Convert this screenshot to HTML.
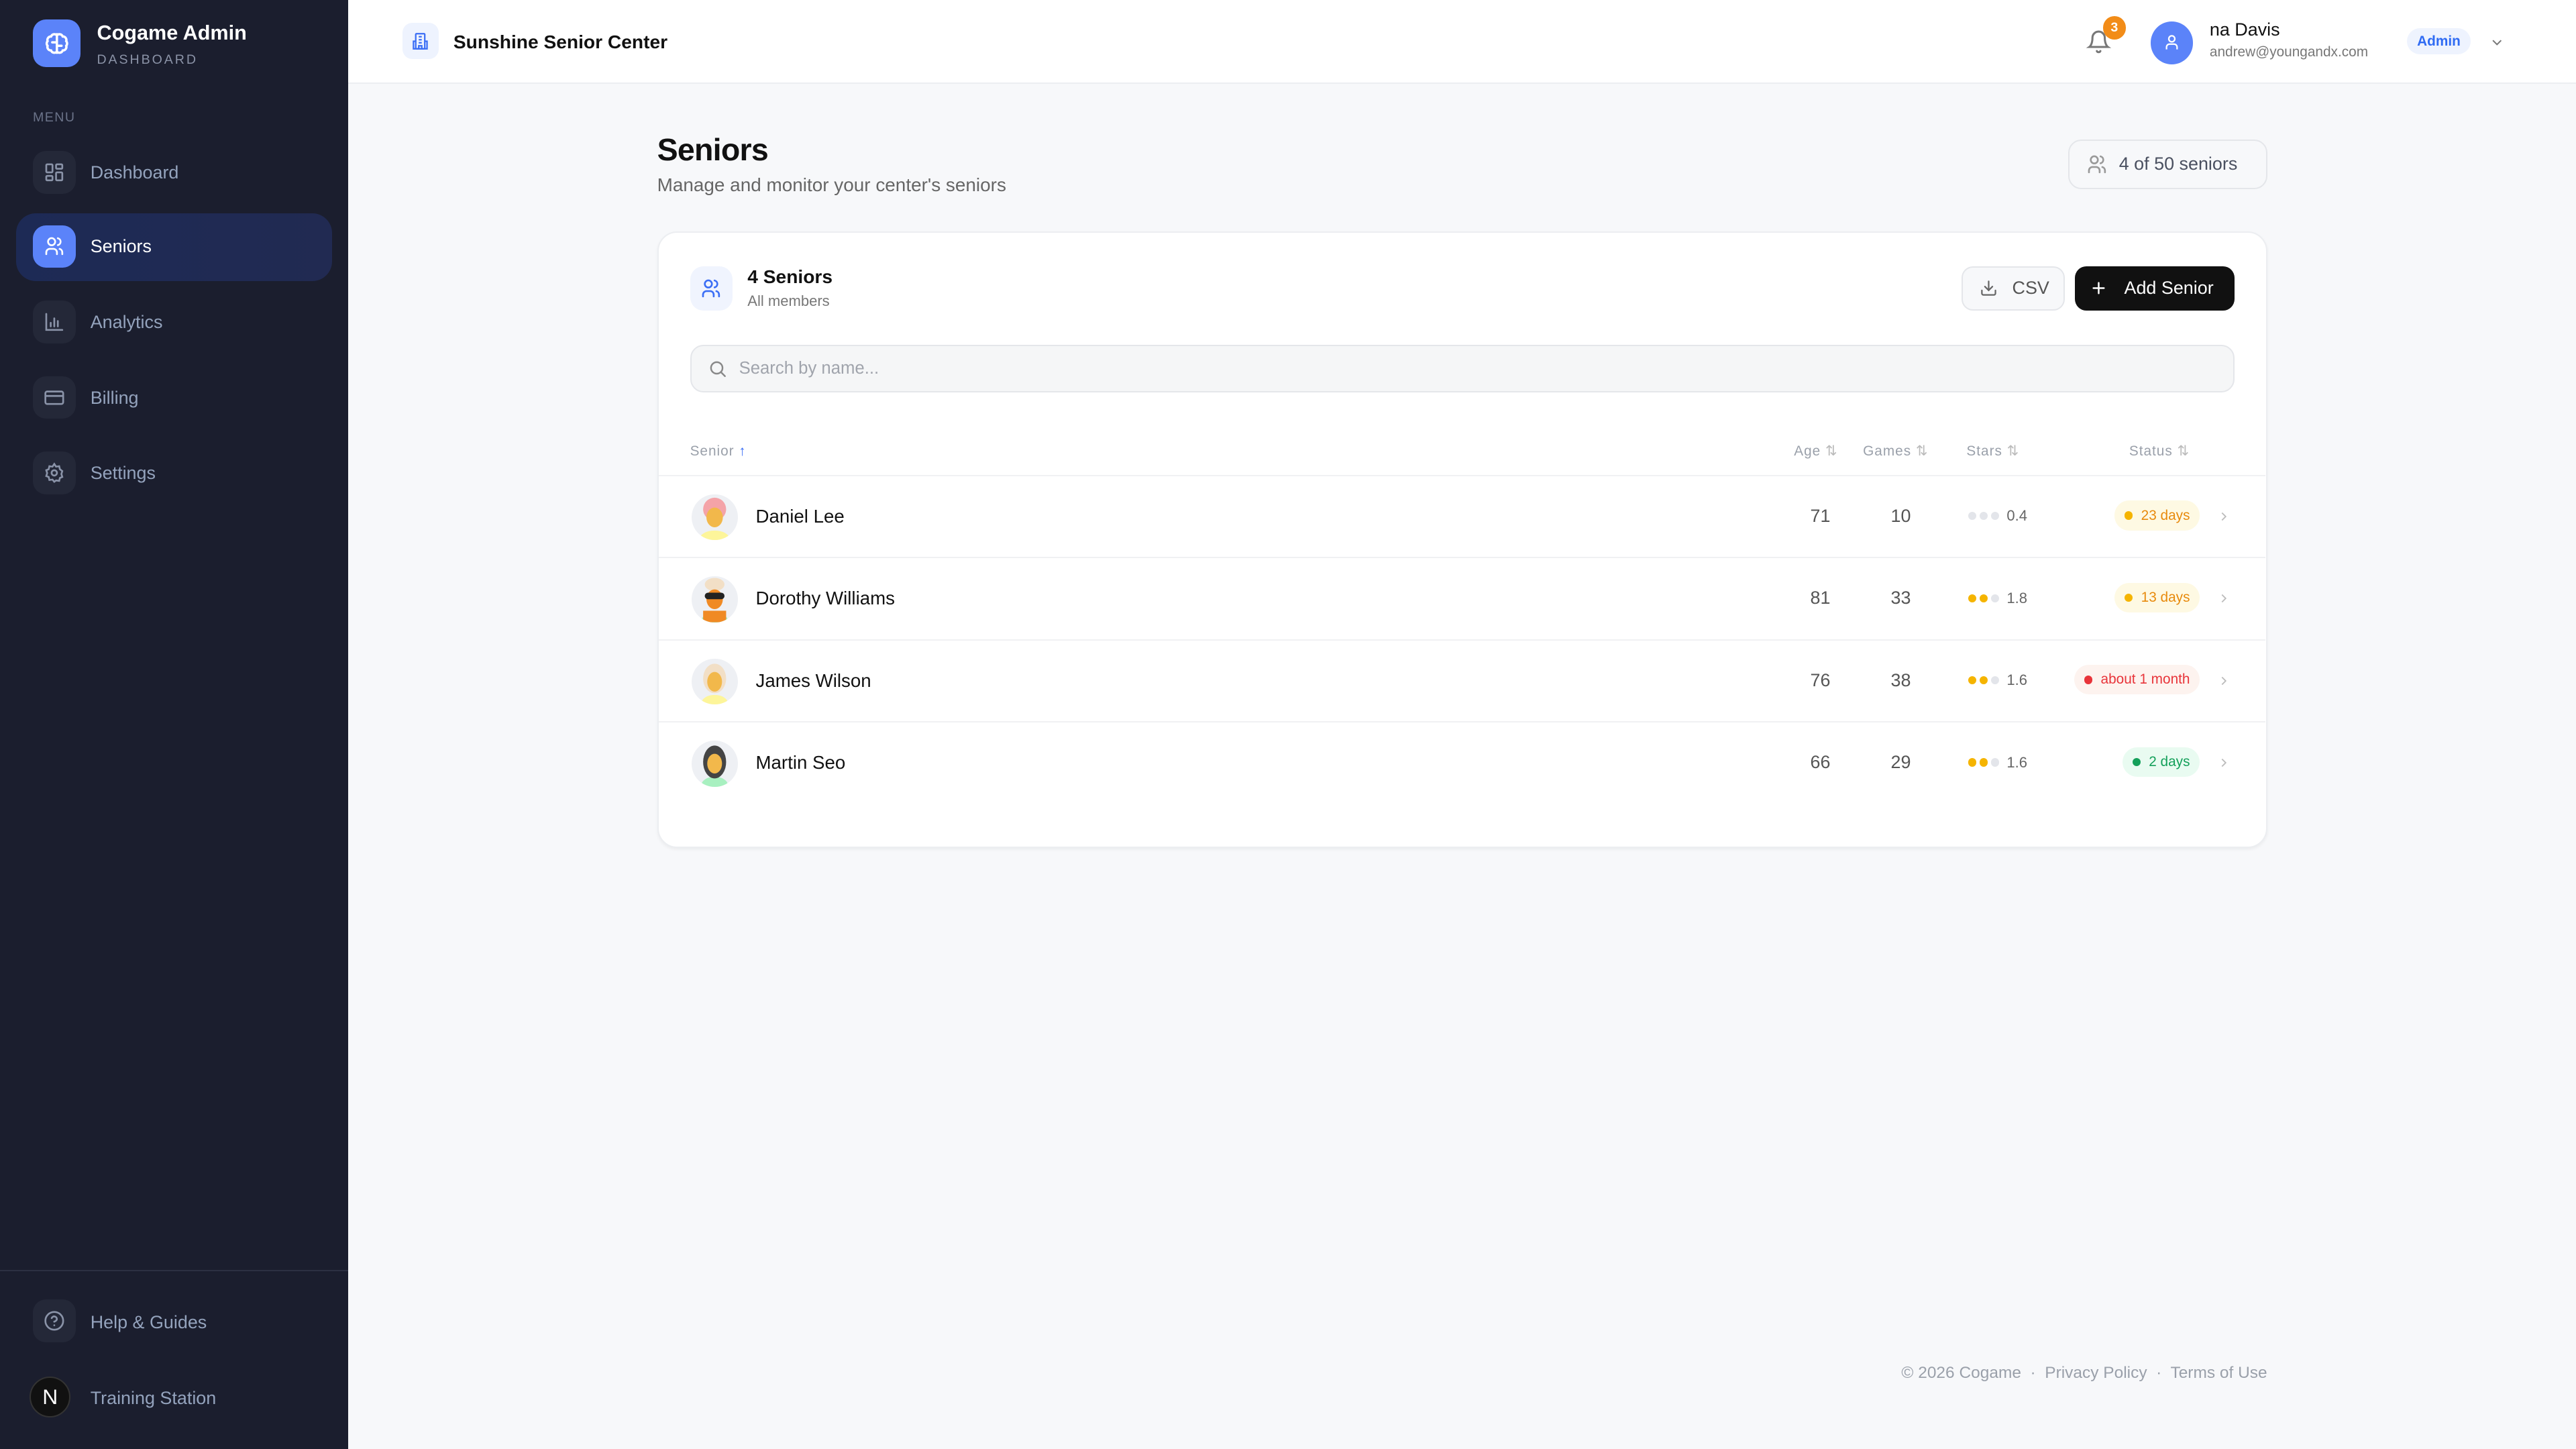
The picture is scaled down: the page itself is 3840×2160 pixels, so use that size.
<!DOCTYPE html>
<html><head><meta charset="utf-8">
<style>
*{box-sizing:border-box;margin:0;padding:0}
html,body{width:3840px;height:2160px;overflow:hidden;background:#f7f8fa}
#r{position:relative;width:1568px;height:882px;zoom:2.44898;font-family:"Liberation Sans",sans-serif;background:#f7f8fa;color:#111}
.a{position:absolute}
.sb{left:0;top:0;width:212px;height:882px;background:#1b1e2e}
.nav .ib{position:absolute;left:20px;width:26px;height:26px;border-radius:8px;background:#242838;display:flex;align-items:center;justify-content:center}
.nav .lb{position:absolute;left:55px;font-size:11px;color:#94a3bd;line-height:14px}
svg{display:block}
.th{position:absolute;top:270px;font-size:8.5px;color:#9aa0aa;letter-spacing:.4px;line-height:10px}
.row{position:absolute;left:401px;width:978px;height:50px;border-top:1px solid #f0f1f3}
.av{position:absolute;left:20px;top:11px;width:28px;height:28px;border-radius:50%;background:#eef0f4;overflow:hidden}
.nm{position:absolute;left:59px;top:18px;font-size:11.3px;color:#111}
.num{position:absolute;top:18px;font-size:11px;color:#555;width:30px;text-align:center}
.st{position:absolute;left:797px;top:19px;font-size:9px;color:#666;display:flex;align-items:center;gap:2px}
.d{width:5px;height:5px;border-radius:50%;background:#e3e5ea}
.d.y{background:#f5b400}
.pill{position:absolute;right:40px;top:15px;height:18px;border-radius:9px;font-size:8.5px;display:flex;align-items:center;padding:0 6px;gap:5px}
.pill i{width:5px;height:5px;border-radius:50%;display:block}
.chev{position:absolute;left:948px;top:20px}
</style></head><body><div id="r">
<div class="a sb"></div>
<div class="a" style="left:20px;top:12px;width:29px;height:29px;border-radius:8px;background:#5b83f9;display:flex;align-items:center;justify-content:center">
<svg width="17" height="17" viewBox="0 0 24 24" fill="none" stroke="#fff" stroke-width="2" stroke-linecap="round"><path d="M12 4v16M12 5a3 3 0 0 0-5 1 3 3 0 0 0-3 4 3 3 0 0 0 0 4 3 3 0 0 0 3 4 3 3 0 0 0 5 1M12 5a3 3 0 0 1 5 1 3 3 0 0 1 3 4 3 3 0 0 1 0 4 3 3 0 0 1-3 4 3 3 0 0 1-5 1M8 11h4M12 14h4"/></svg></div>
<div class="a" style="left:59px;top:13px;font-size:12.5px;font-weight:bold;color:#fff">Cogame Admin</div>
<div class="a" style="left:59px;top:32px;font-size:8px;letter-spacing:1.2px;color:#8b93a7">DASHBOARD</div>
<div class="a" style="left:20px;top:67px;font-size:8px;letter-spacing:.6px;color:#6b7389">MENU</div>
<div class="a" style="left:10px;top:130px;width:192px;height:41px;border-radius:12px;background:linear-gradient(90deg,#1d2a55,#212a52)"></div>
<div class="nav">
<div class="ib" style="top:92px"><svg width="13" height="13" viewBox="0 0 24 24" fill="none" stroke="#8a93a8" stroke-width="2"><rect x="3" y="3" width="7" height="9" rx="1"/><rect x="14" y="3" width="7" height="5" rx="1"/><rect x="14" y="12" width="7" height="9" rx="1"/><rect x="3" y="16" width="7" height="5" rx="1"/></svg></div>
<div class="lb" style="top:98px">Dashboard</div>
<div class="ib" style="top:137px;background:#5b83f9"><svg width="13" height="13" viewBox="0 0 24 24" fill="none" stroke="#fff" stroke-width="2" stroke-linecap="round"><circle cx="9" cy="7" r="4"/><path d="M3 21v-2a4 4 0 0 1 4-4h4a4 4 0 0 1 4 4v2M16 3.1a4 4 0 0 1 0 7.8M21 21v-2a4 4 0 0 0-3-3.9"/></svg></div>
<div class="lb" style="top:143px;color:#fff">Seniors</div>
<div class="ib" style="top:183px"><svg width="13" height="13" viewBox="0 0 24 24" fill="none" stroke="#8a93a8" stroke-width="2" stroke-linecap="round"><path d="M3 3v18h18M8 17v-4M12 17V8M16 17v-6"/></svg></div>
<div class="lb" style="top:189px">Analytics</div>
<div class="ib" style="top:229px"><svg width="13" height="13" viewBox="0 0 24 24" fill="none" stroke="#8a93a8" stroke-width="2"><rect x="2" y="5" width="20" height="14" rx="2"/><path d="M2 10h20"/></svg></div>
<div class="lb" style="top:235px">Billing</div>
<div class="ib" style="top:275px"><svg width="13" height="13" viewBox="0 0 24 24" fill="none" stroke="#8a93a8" stroke-width="2"><circle cx="12" cy="12" r="3"/><path d="M12 2l2 3 3.5-.5.8 3.4L21 10l-1 3.3 1 3.3-2.7 1.1-.8 3.300-3.5-.5L12 22l-2-2.5-3.5.5-.8-3.4L3 15.6 4 12.3 3 9l2.7-1.1.8-3.4 3.5.5z"/></svg></div>
<div class="lb" style="top:281px">Settings</div>
<div class="a" style="left:0;top:773px;width:212px;height:1px;background:#2c3042"></div>
<div class="ib" style="top:791px"><svg width="13" height="13" viewBox="0 0 24 24" fill="none" stroke="#8a93a8" stroke-width="2" stroke-linecap="round"><circle cx="12" cy="12" r="10"/><path d="M9.1 9a3 3 0 0 1 5.8 1c0 2-3 3-3 3M12 17h.01"/></svg></div>
<div class="lb" style="top:798px">Help &amp; Guides</div>
<div class="a" style="left:18px;top:838px;width:25px;height:25px;border-radius:50%;background:#111;border:1px solid #333;color:#fff;font-size:13px;display:flex;align-items:center;justify-content:center">N</div>
<div class="lb" style="top:844px">Training Station</div>
</div>
<div class="a" style="left:212px;top:0;width:1356px;height:51px;background:#fff;border-bottom:1px solid #eceef1"></div>
<div class="a" style="left:245px;top:14px;width:22px;height:22px;border-radius:6px;background:#eef3fe;display:flex;align-items:center;justify-content:center"><svg width="11" height="11" viewBox="0 0 24 24" fill="none" stroke="#3b6ef5" stroke-width="2"><rect x="6" y="2" width="12" height="20" rx="1"/><path d="M2 22h20M10 6h4M10 10h4M10 14h4M10 22v-4h4v4M6 12H3v10M18 12h3v10"/></svg></div>
<div class="a" style="left:276px;top:19px;font-size:11.5px;font-weight:bold">Sunshine Senior Center</div>
<svg class="a" style="left:1270px;top:18px" width="15" height="15" viewBox="0 0 24 24" fill="none" stroke="#777" stroke-width="2" stroke-linecap="round"><path d="M6 8a6 6 0 0 1 12 0c0 7 3 9 3 9H3s3-2 3-9M10.3 21a1.9 1.9 0 0 0 3.4 0"/></svg>
<div class="a" style="left:1280px;top:10px;width:14px;height:14px;border-radius:50%;background:#f28c18;color:#fff;font-size:8px;font-weight:bold;text-align:center;line-height:14px">3</div>
<div class="a" style="left:1309px;top:13px;width:26px;height:26px;border-radius:50%;background:#5b83f9;display:flex;align-items:center;justify-content:center"><svg width="11" height="11" viewBox="0 0 24 24" fill="none" stroke="#fff" stroke-width="2"><circle cx="12" cy="7" r="4"/><path d="M5 21v-3a4 4 0 0 1 4-4h6a4 4 0 0 1 4 4v3"/></svg></div>
<div class="a" style="left:1345px;top:12px;font-size:11px">na Davis</div>
<div class="a" style="left:1345px;top:27px;font-size:8.5px;color:#777">andrew@youngandx.com</div>
<div class="a" style="left:1465px;top:17px;width:39px;height:16px;border-radius:8px;background:#eef3fe;color:#2f6bf3;font-size:8.5px;font-weight:bold;text-align:center;line-height:16px">Admin</div>
<svg class="a" style="left:1515px;top:21px" width="10" height="10" viewBox="0 0 24 24" fill="none" stroke="#777" stroke-width="2"><path d="M6 9l6 6 6-6"/></svg>
<div class="a" style="left:400px;top:80px;font-size:19px;font-weight:bold;letter-spacing:-.3px">Seniors</div>
<div class="a" style="left:400px;top:106px;font-size:11.4px;color:#666">Manage and monitor your center's seniors</div>
<div class="a" style="left:1259px;top:85px;width:121px;height:30px;border:1px solid #e4e6ea;border-radius:8px;background:#f7f8fa;display:flex;align-items:center;padding-left:10px;gap:7px;font-size:11px;color:#4a5060"><svg width="13" height="13" viewBox="0 0 24 24" fill="none" stroke="#999" stroke-width="2" stroke-linecap="round"><circle cx="9" cy="7" r="4"/><path d="M3 21v-2a4 4 0 0 1 4-4h4a4 4 0 0 1 4 4v2M16 3.1a4 4 0 0 1 0 7.8M21 21v-2a4 4 0 0 0-3-3.9"/></svg>4 of 50 seniors</div>
<div class="a" style="left:400px;top:141px;width:980px;height:375px;background:#fff;border:1px solid #eceef1;border-radius:12px;box-shadow:0 1px 2px rgba(0,0,0,.05)"></div>
<div class="a" style="left:420px;top:162px;width:26px;height:27px;border-radius:8px;background:#f0f4fe;display:flex;align-items:center;justify-content:center"><svg width="13" height="13" viewBox="0 0 24 24" fill="none" stroke="#3b6ef5" stroke-width="2" stroke-linecap="round"><circle cx="9" cy="7" r="4"/><path d="M3 21v-2a4 4 0 0 1 4-4h4a4 4 0 0 1 4 4v2M16 3.1a4 4 0 0 1 0 7.8M21 21v-2a4 4 0 0 0-3-3.9"/></svg></div>
<div class="a" style="left:455px;top:162px;font-size:11.5px;font-weight:bold">4 Seniors</div>
<div class="a" style="left:455px;top:178px;font-size:9px;color:#777">All members</div>
<div class="a" style="left:1194px;top:162px;width:63px;height:27px;border:1px solid #e4e6ea;border-radius:7px;background:#f7f8fa;display:flex;align-items:center;padding-left:10px;gap:9px;font-size:11px;color:#555"><svg width="11" height="11" viewBox="0 0 24 24" fill="none" stroke="#666" stroke-width="2" stroke-linecap="round"><path d="M21 15v4a2 2 0 0 1-2 2H5a2 2 0 0 1-2-2v-4M7 10l5 5 5-5M12 15V3"/></svg>CSV</div>
<div class="a" style="left:1263px;top:162px;width:97px;height:27px;border-radius:7px;background:#111;display:flex;align-items:center;padding-left:9px;gap:10px;font-size:11px;color:#fff"><svg width="11" height="11" viewBox="0 0 24 24" fill="none" stroke="#fff" stroke-width="2.2" stroke-linecap="round"><path d="M12 5v14M5 12h14"/></svg>Add Senior</div>
<div class="a" style="left:420px;top:210px;width:940px;height:29px;border:1px solid #e4e6ea;border-radius:8px;background:#f5f6f7;display:flex;align-items:center;padding-left:10px;gap:7px;font-size:10.5px;color:#a0a4ac"><svg width="12" height="12" viewBox="0 0 24 24" fill="none" stroke="#888" stroke-width="2" stroke-linecap="round"><circle cx="11" cy="11" r="7"/><path d="M21 21l-5-5"/></svg>Search by name...</div>
<div class="th" style="left:420px">Senior <span style="color:#3b6ef5">↑</span></div>
<div class="th" style="left:1092px">Age <span style="color:#bbb">⇅</span></div>
<div class="th" style="left:1134px">Games <span style="color:#bbb">⇅</span></div>
<div class="th" style="left:1197px">Stars <span style="color:#bbb">⇅</span></div>
<div class="th" style="left:1296px">Status <span style="color:#bbb">⇅</span></div>

<div class="row" style="top:289px"><div class="av"><svg width="28" height="28" viewBox="0 0 28 28"><ellipse cx="14" cy="27" rx="9" ry="5" fill="#fdf59a"/><circle cx="14" cy="9" r="7" fill="#f4a3a8"/><ellipse cx="14" cy="14" rx="5" ry="6" fill="#f2b84b"/></svg></div><div class="nm">Daniel Lee</div><div class="num" style="left:692px">71</div><div class="num" style="left:741px">10</div><div class="st"><i class="d"></i><i class="d"></i><i class="d"></i>&nbsp;0.4</div><div class="pill" style="background:#fef9e3;color:#e88a0c"><i style="background:#f5b400"></i>23 days</div><svg class="chev" width="9" height="9" viewBox="0 0 24 24" fill="none" stroke="#bbb" stroke-width="2"><path d="M9 6l6 6-6 6"/></svg></div>
<div class="row" style="top:339px"><div class="av"><svg width="28" height="28" viewBox="0 0 28 28"><ellipse cx="14" cy="27" rx="8" ry="5" fill="#a8f0c0"/><rect x="7" y="21" width="14" height="7" fill="#f08a24"/><ellipse cx="14" cy="5" rx="6" ry="4" fill="#f2dfc6"/><ellipse cx="14" cy="14" rx="5" ry="6" fill="#f08a24"/><rect x="8" y="10" width="12" height="4" rx="2" fill="#222"/></svg></div><div class="nm">Dorothy Williams</div><div class="num" style="left:692px">81</div><div class="num" style="left:741px">33</div><div class="st"><i class="d y"></i><i class="d y"></i><i class="d"></i>&nbsp;1.8</div><div class="pill" style="background:#fef9e3;color:#e88a0c"><i style="background:#f5b400"></i>13 days</div><svg class="chev" width="9" height="9" viewBox="0 0 24 24" fill="none" stroke="#bbb" stroke-width="2"><path d="M9 6l6 6-6 6"/></svg></div>
<div class="row" style="top:389px"><div class="av"><svg width="28" height="28" viewBox="0 0 28 28"><ellipse cx="14" cy="27" rx="8" ry="5" fill="#fdf59a"/><ellipse cx="14" cy="12" rx="7" ry="9" fill="#f2dfc6"/><ellipse cx="14" cy="14" rx="4.5" ry="6" fill="#f2b84b"/></svg></div><div class="nm">James Wilson</div><div class="num" style="left:692px">76</div><div class="num" style="left:741px">38</div><div class="st"><i class="d y"></i><i class="d y"></i><i class="d"></i>&nbsp;1.6</div><div class="pill" style="background:#fdf3ef;color:#e8343a"><i style="background:#e8343a"></i>about 1 month</div><svg class="chev" width="9" height="9" viewBox="0 0 24 24" fill="none" stroke="#bbb" stroke-width="2"><path d="M9 6l6 6-6 6"/></svg></div>
<div class="row" style="top:439px"><div class="av"><svg width="28" height="28" viewBox="0 0 28 28"><ellipse cx="14" cy="27" rx="8" ry="5" fill="#a8f0c0"/><ellipse cx="14" cy="13" rx="7" ry="10" fill="#444"/><ellipse cx="14" cy="14" rx="4.5" ry="6" fill="#f2b84b"/></svg></div><div class="nm">Martin Seo</div><div class="num" style="left:692px">66</div><div class="num" style="left:741px">29</div><div class="st"><i class="d y"></i><i class="d y"></i><i class="d"></i>&nbsp;1.6</div><div class="pill" style="background:#e9fbf1;color:#14a05a"><i style="background:#14a05a"></i>2 days</div><svg class="chev" width="9" height="9" viewBox="0 0 24 24" fill="none" stroke="#bbb" stroke-width="2"><path d="M9 6l6 6-6 6"/></svg></div>

<div class="a" style="right:188px;top:830px;font-size:10px;color:#9aa0aa;white-space:pre">© 2026 Cogame  ·  Privacy Policy  ·  Terms of Use</div>
</div></body></html>
